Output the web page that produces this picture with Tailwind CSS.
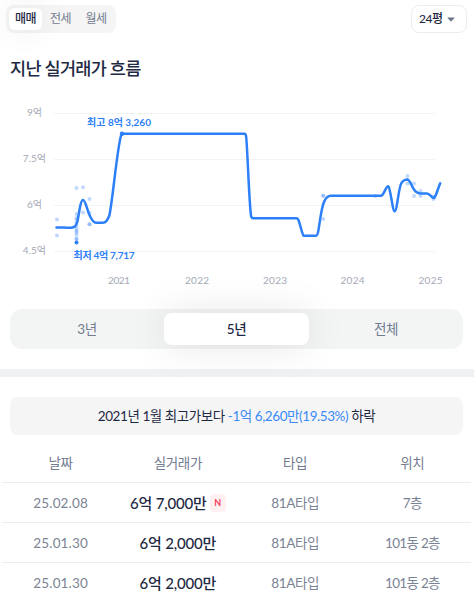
<!DOCTYPE html>
<html lang="ko">
<head>
<meta charset="utf-8">
<title>지난 실거래가 흐름</title>
<script src="https://cdn.jsdelivr.net/npm/@tailwindcss/browser@4"></script>
</head>
<body class="bg-white overflow-hidden">
<div class="w-[474px] h-[600px] overflow-hidden font-['Lato','Noto_Sans_CJK_KR',sans-serif] text-[#1e2943]">
  <header class="flex justify-between pt-[5px] pl-[6px] pr-[7px]">
    <div class="flex items-center w-[110px] h-7 p-[3px] rounded-[8px] bg-[#f5f5f5] text-xs text-[#727b90] tracking-[-0.5px]">
      <div class="flex items-center justify-center w-[33px] h-[22px] rounded-[6px] bg-white text-[#1e2943] font-medium shadow-[0_0_30px_rgba(0,0,0,0.08)]">매매</div>
      <div class="w-[37px] text-center leading-[22px]">전세</div>
      <div class="w-[34px] text-center leading-[22px]">월세</div>
    </div>
    <div class="flex items-center w-14 h-7 pl-[7px] gap-[4px] rounded-[8px] border border-[#ececee] text-xs font-medium tracking-[-0.4px]">
      <span>24평</span>
      <svg class="w-[8px] h-[5px]" viewBox="0 0 8 5"><path d="M.7.4h6.6q.6 0 .2.5L4.4 4.3q-.4.4-.8 0L.5.9Q.1.4.7.4Z" fill="#6d778c"/></svg>
    </div>
  </header>

  <h1 class="mt-[23px] pl-[10px] h-[26px] leading-[26px] text-[17.500px] font-medium tracking-[-0.7px]">지난 실거래가 흐름</h1>

  <svg class="block w-[474px] h-[214px] mt-[8px]" viewBox="0 90 474 214">
    <g stroke="#f2f3f4" stroke-width="1">
      <path d="M54 113.5H435M54 159.5H435M54 205.5H435M54 251.5H435"/>
    </g>
    <g fill="#a4a9b5" font-size="10" text-anchor="end">
      <text x="42" y="116">9억</text>
      <text x="46" y="162">7.5억</text>
      <text x="42" y="208">6억</text>
      <text x="46" y="254">4.5억</text>
    </g>
    <g fill="#a4a9b5" font-size="10" text-anchor="middle">
      <text x="119" y="284" textLength="22">2021</text>
      <text x="197" y="284" textLength="24">2022</text>
      <text x="275" y="284" textLength="24">2023</text>
      <text x="352.5" y="284" textLength="24">2024</text>
      <text x="430.500" y="284" textLength="24">2025</text>
    </g>
    <g fill="#2d80f7" fill-opacity=".3">
      <circle cx="57" cy="219.500" r="2"/><circle cx="57" cy="235.500" r="2"/>
      <circle cx="76.500" cy="188" r="2"/><circle cx="83" cy="187.200" r="2"/><circle cx="89.500" cy="199" r="2"/>
      <circle cx="76.500" cy="214" r="2"/><circle cx="83" cy="212.500" r="2"/>
      <circle cx="76.500" cy="218" r="2"/><circle cx="76.500" cy="220" r="2"/><circle cx="76.500" cy="223" r="2"/>
      <circle cx="76.500" cy="226" r="2"/><circle cx="76.500" cy="229" r="2"/><circle cx="76.500" cy="231" r="2"/>
      <circle cx="76.500" cy="232.500" r="2"/><circle cx="76.500" cy="235" r="2"/><circle cx="76.500" cy="239" r="2"/><circle cx="76.500" cy="239" r="2"/>
      <circle cx="89.500" cy="224.300" r="2"/><circle cx="89.500" cy="224.300" r="2"/><circle cx="89.500" cy="213" r="2"/>
      <circle cx="323.200" cy="195.800" r="2"/><circle cx="323.200" cy="195.800" r="2"/><circle cx="323.200" cy="219" r="2"/>
      <circle cx="375.300" cy="196" r="2"/>
      <circle cx="407.500" cy="176" r="2"/><circle cx="407.500" cy="183.500" r="2"/><circle cx="414" cy="183.500" r="2"/>
      <circle cx="414" cy="196" r="2"/><circle cx="420.500" cy="191" r="2"/><circle cx="420.500" cy="196" r="2"/>
      <circle cx="433.500" cy="196.500" r="2"/><circle cx="433.500" cy="199" r="2"/>
    </g>
    <path fill="none" stroke="#2d80f7" stroke-width="2.500" stroke-linecap="round" stroke-linejoin="round" d="M56.500 227.500H63C67 227.500 69 228 71 227.800C74 227.300 76 227 77.500 221C79 214 80.500 200 83 200C85.500 200 87 210 89.500 215C91.500 219.500 93.500 222.700 96 222.700H103C106 222.700 108 219.500 109.500 215C113 197 117 150 121 135.500Q121.500 133.700 123 133.700H244.500Q246 133.700 246.300 138C248 160 249 200 251 215.500Q251.500 218.200 253 218.200H296.500Q298 218.200 298.800 221C300.500 225.500 301.500 232 303.500 235.700H316Q317.500 235.700 318.500 230C320.500 218 321.500 206 324.500 201C326 197.500 328 195.700 331 195.700H381C384 195.700 385.500 186.300 388.300 186.300C390.500 188 392.500 211.300 394.700 211.300C397 211.300 398.500 188.500 401.200 183.500C403 180.500 405 179.600 407.500 179.600C410 180 411.500 186 414 189.500C416 192.500 418 193.400 421 193.400H427C430 193.400 431.500 198 434 198C436.500 196 438 187.500 440.200 183.300"/>
    <circle cx="122" cy="133.700" r="2.200" fill="#2d80f7"/>
    <circle cx="76.500" cy="242.600" r="2" fill="#2d80f7"/>
    <g fill="#2d80f7" font-size="10" font-weight="700">
      <text x="87" y="126" textLength="64">최고 8억 3,260</text>
      <text x="73.500" y="259" textLength="61">최저 4억 7,717</text>
    </g>
  </svg>

  <div class="mt-[5px] mx-auto w-[454px] h-10 pr-px">
    <div class="flex items-center h-10 rounded-[12px] bg-[#f3f5f5] text-[13.500px] leading-8 text-center text-[#727b90] tracking-[-0.4px]">
      <div class="w-[154px]">3년</div>
      <div class="w-[145px] h-8 rounded-[8px] bg-white text-[#1e2943] font-medium shadow-[0_0_40px_rgba(0,0,0,0.1)]">5년</div>
      <div class="w-[154px]">전체</div>
    </div>
  </div>

  <div class="mt-5 h-2 bg-[#f0f1f3]"></div>

  <div class="mt-5 ml-[10px] w-[453px] h-[38px] rounded-[8px] bg-[#f5f5f5] text-center text-[13.500px] leading-[38px] tracking-[-0.43px] whitespace-nowrap">2021년 1월 최고가보다 <span class="text-[#3b8af8]">-1억 6,260만(19.53%)</span> 하락</div>

  <div class="mt-[8px] ml-[2px] w-[469px] text-center text-[13.500px] text-[#7b8396] tracking-[-0.4px]">
    <div class="grid grid-cols-4 h-10 leading-10 border-b border-[#ececee] text-[#727b90]">
      <div>날짜</div><div>실거래가</div><div>타입</div><div>위치</div>
    </div>
    <div class="grid grid-cols-4 h-10 leading-10 border-b border-[#ececee]">
      <div class="tracking-[0.15px]">25.02.08</div>
      <div class="flex items-center justify-center gap-[3px] text-[15px] font-medium text-[#1e2943]"><span class="tracking-[-0.2px]">6억 7,000만</span><span class="w-4 h-[18px] rounded-[4px] bg-[#fff0f2] text-[#f43f5e] text-[9px] leading-[18px] font-bold">N</span></div>
      <div>81A타입</div><div>7층</div>
    </div>
    <div class="grid grid-cols-4 h-10 leading-10 border-b border-[#ececee]">
      <div class="tracking-[0.15px]">25.01.30</div><div class="text-[15px] font-medium text-[#1e2943] tracking-[-0.2px]">6억 2,000만</div><div>81A타입</div><div class="tracking-[-0.7px]">101동 2층</div>
    </div>
    <div class="grid grid-cols-4 h-10 leading-10">
      <div class="tracking-[0.15px]">25.01.30</div><div class="text-[15px] font-medium text-[#1e2943] tracking-[-0.2px]">6억 2,000만</div><div>81A타입</div><div class="tracking-[-0.7px]">101동 2층</div>
    </div>
  </div>
</div>
</body>
</html>
